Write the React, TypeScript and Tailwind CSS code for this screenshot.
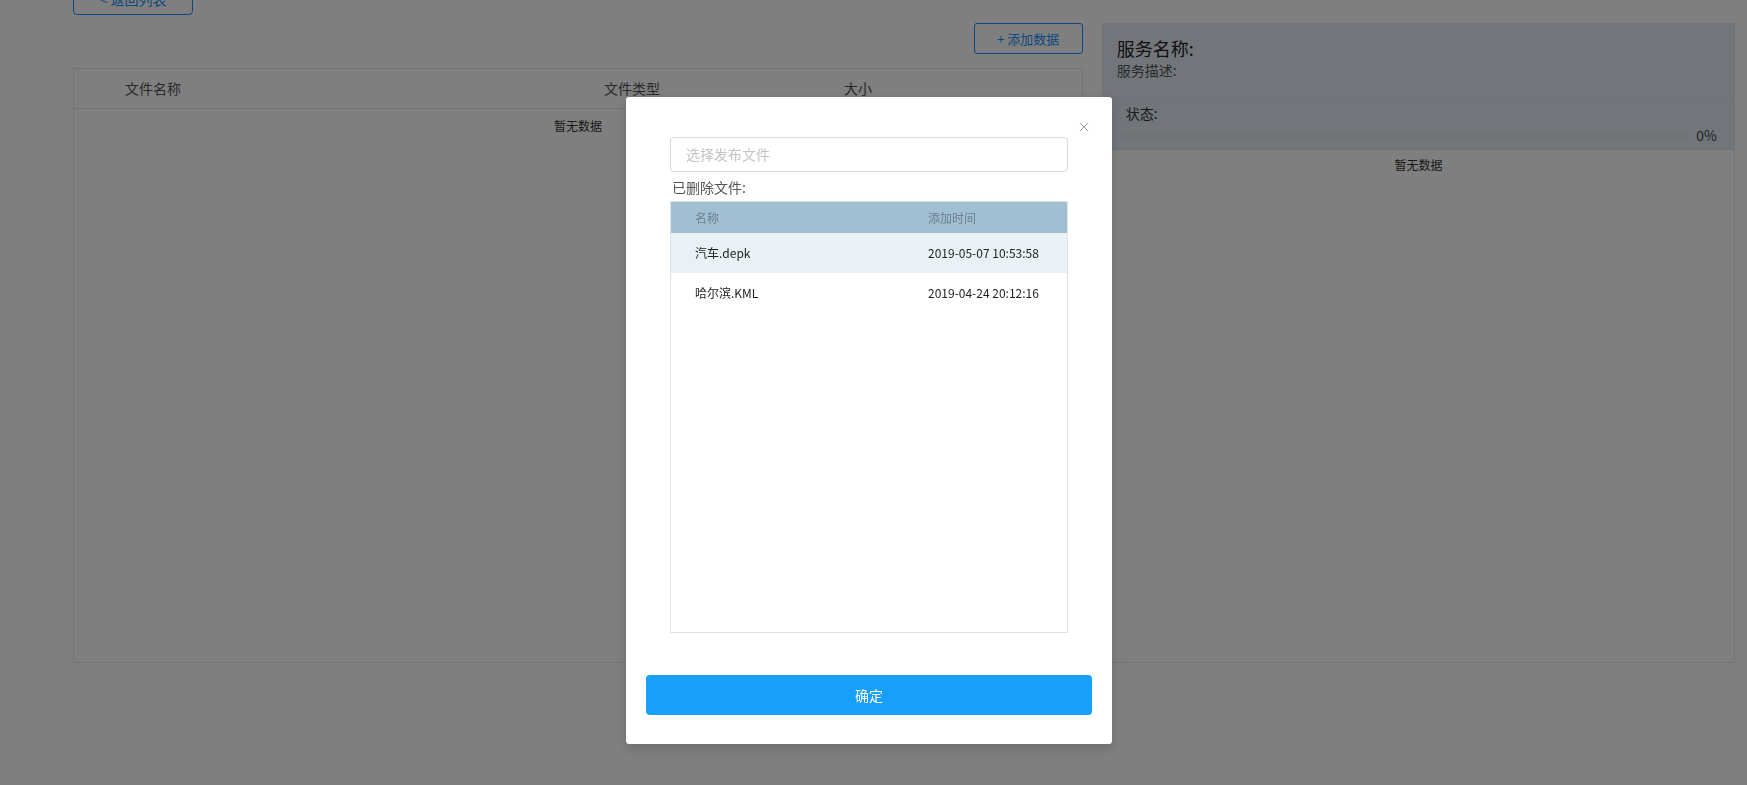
import { X } from "lucide-react"

const font = { fontFamily: '"Noto Sans CJK SC", "Noto Sans", sans-serif' }

const deleted = [
  { name: "汽车.depk", time: "2019-05-07 10:53:58" },
  { name: "哈尔滨.KML", time: "2019-04-24 20:12:16" },
]

function FileTable() {
  return (
    <div className="mt-[14px] h-[595px] border border-[#e8e8e8] bg-white">
      <div className="flex h-[40px] items-center border-b border-[#e8e8e8] text-[14px] text-[#555]">
        <div className="w-[530px] pl-[51px]">文件名称</div>
        <div className="w-[240px]">文件类型</div>
        <div>大小</div>
      </div>
      <div className="py-[8px] text-center text-[12px] text-[#333]">暂无数据</div>
    </div>
  )
}

function ServicePanel() {
  return (
    <div className="h-[640px] w-[634px] border border-[#e8e8e8] bg-white">
      <div className="h-[76px] border-b border-[#dde4ea] bg-[#e5edf6] px-[14px] pt-[12px]">
        <div className="text-[18px] leading-[24px] text-[#222]">服务名称:</div>
        <div className="text-[14px] leading-[20px] text-[#555]">服务描述:</div>
      </div>
      <div className="h-[50px] border-b border-[#dde4ea] bg-[#e5edf6] pl-[17px] pr-[17px] pt-[3px]">
        <div className="pl-[6px] text-[14px] leading-[20px] text-[#333]">状态:</div>
        <div className="mt-[2px] flex items-center gap-[6px]">
          <div className="h-[6px] flex-1 rounded-full bg-[#dfe6ed]"></div>
          <div className="text-[14px] leading-[20px] text-[#444]">0%</div>
        </div>
      </div>
      <div className="py-[6px] text-center text-[12px] text-[#333]">暂无数据</div>
    </div>
  )
}

function RecoverModal() {
  return (
    <div className="absolute left-[626px] top-[97px] h-[647px] w-[486px] rounded-[3px] bg-white shadow-[0_4px_12px_rgba(0,0,0,0.15)]">
      <button className="absolute right-[20px] top-[22px] text-[#999]">
        <X className="h-[16px] w-[16px]" strokeWidth={1.4} />
      </button>
      <div className="px-[44px] pt-[40px]">
        <div className="flex h-[35px] w-[398px] items-center rounded-[4px] border border-[#d9d9d9] px-[15px] text-[14px] text-[#c4c4c4]">
          选择发布文件
        </div>
        <div className="mt-[6px] pl-[2px] text-[14px] leading-[18px] text-[#555]">已删除文件:</div>
        <div className="mt-[5px] h-[432px] w-[398px] border border-[#dce4ea]">
          <div className="flex h-[31px] items-center bg-[#a1bfd2] text-[12px] text-[#6e7f8c]">
            <div className="w-[257px] pl-[24px]">名称</div>
            <div>添加时间</div>
          </div>
          {deleted.map((row, i) => (
            <div
              key={row.name}
              className={`flex h-[40px] items-center text-[12px] text-[#222] ${i === 0 ? "bg-[#e9f1f5]" : "bg-white"}`}
            >
              <div className="w-[257px] pl-[24px]">{row.name}</div>
              <div>{row.time}</div>
            </div>
          ))}
        </div>
      </div>
      <div className="px-[20px] pt-[42px]">
        <button className="h-[40px] w-[446px] rounded-[4px] bg-[#189ff8] text-[14px] text-white">确定</button>
      </div>
    </div>
  )
}

export default function App() {
  return (
    <div className="relative h-[785px] overflow-hidden bg-white" style={font}>
      <div className="pl-[73px] pr-[12px]">
        <div className="-mt-[16px] flex">
          <button className="h-[31px] w-[120px] rounded-[4px] border border-[#1890ff] text-[14px] text-[#1890ff]">
            &lt; 返回列表
          </button>
        </div>
        <div className="mt-[8px] flex gap-[19px]">
          <div className="flex w-[1011px] flex-col">
            <div className="flex justify-end">
              <button className="h-[31px] w-[109px] rounded-[3px] border border-[#1890ff] text-[13px] text-[#1890ff]">
                + 添加数据
              </button>
            </div>
            <FileTable />
          </div>
          <ServicePanel />
        </div>
      </div>

      <div className="fixed inset-0 bg-black/50"></div>
      <RecoverModal />
    </div>
  )
}
